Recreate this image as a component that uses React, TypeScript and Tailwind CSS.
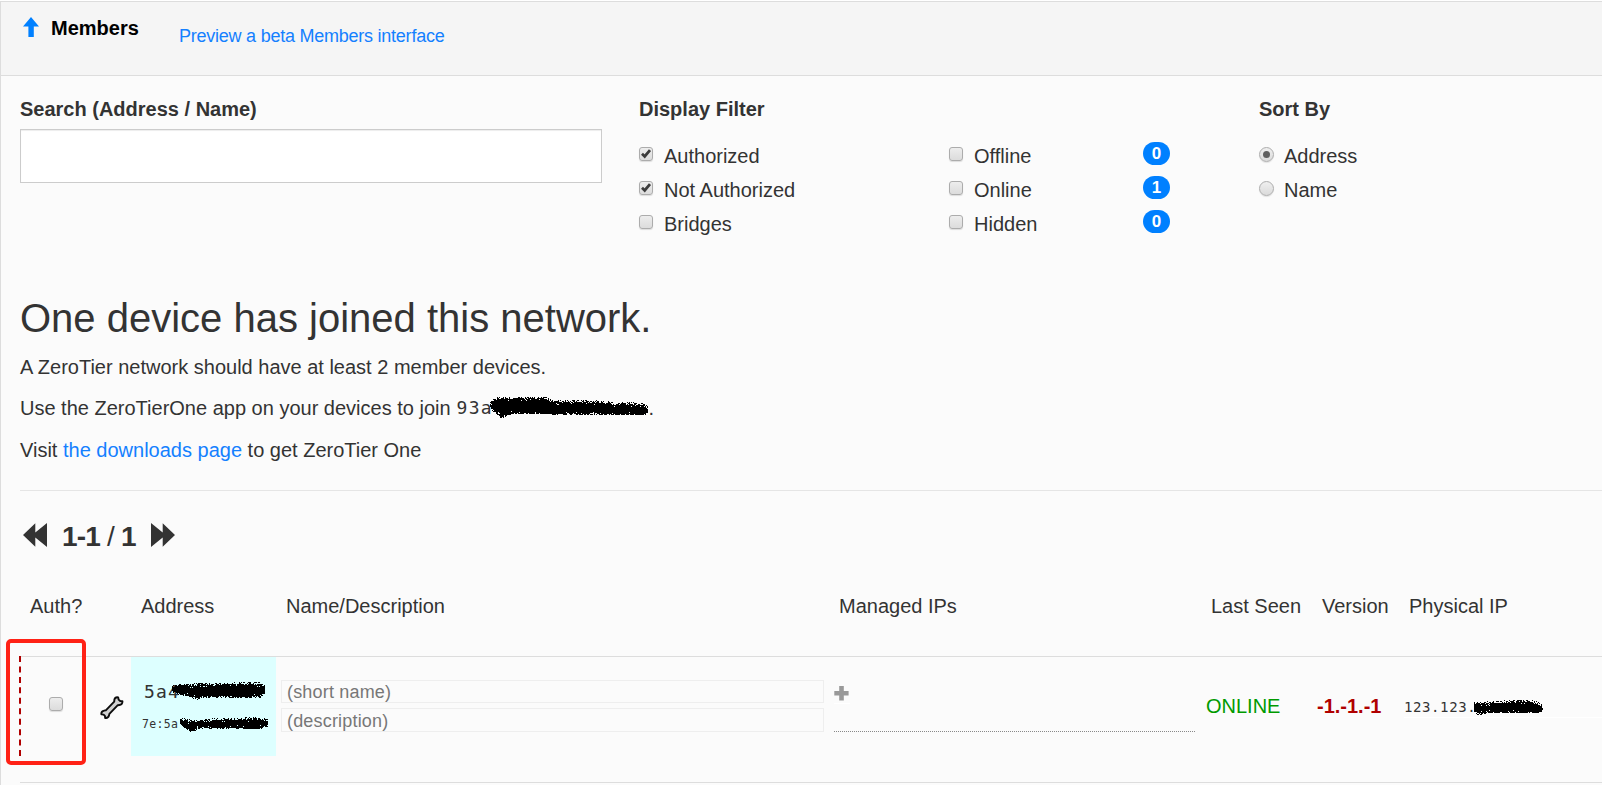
import type { ReactNode } from "react";

type Point = [number, number, number];

function makeRandom(seed: number) {
  let s = seed;
  return () => {
    s = (s * 1664525 + 1013904223) % 4294967296;
    return s / 4294967296;
  };
}

/* Grainy marker stroke; each point is [x, top, bottom] of the stroke outline. */
function Scribble({ points, width, height, seed, className }: { points: Point[]; width: number; height: number; seed: number; className: string }) {
  const random = makeRandom(seed);
  let d = "";
  for (let i = 0; i < points.length - 1; i++) {
    const [x0, t0, b0] = points[i];
    const [x1, t1, b1] = points[i + 1];
    for (let x = x0; x < x1; x++) {
      const k = (x - x0) / (x1 - x0);
      const top = t0 + (t1 - t0) * k;
      const bottom = b0 + (b1 - b0) * k;
      for (let y = Math.floor(top) - 1; y <= Math.ceil(bottom); y++) {
        const depth = Math.min(y - top, bottom - y);
        const density = depth < 0 ? 0.4 : depth < 1 ? 0.8 : depth < 3 ? 0.95 : 1;
        if (random() < density) d += `M${x} ${y}h1v1h-1z`;
      }
    }
  }
  return (
    <svg className={className} width={width} height={height} viewBox={`0 0 ${width} ${height}`} shapeRendering="crispEdges" aria-hidden="true">
      <path d={d} fill="#000" />
    </svg>
  );
}

function Check({ checked = false }: { checked?: boolean }) {
  return (
    <span className="block h-[14px] w-[14px] shrink-0 rounded-[3px] border border-[#acacac] bg-linear-to-b from-[#ededed] to-[#dcdcdc] shadow-[0_1px_1px_rgba(0,0,0,0.12)]">
      {checked && (
        <svg width="12" height="12" viewBox="0 0 12 12" className="block">
          <path d="M2 5.8 4.7 8.4 10 2.2" fill="none" stroke="#3c3c3c" strokeWidth="2.8" />
        </svg>
      )}
    </span>
  );
}

function Radio({ checked = false }: { checked?: boolean }) {
  return (
    <span className="flex h-[15px] w-[15px] shrink-0 items-center justify-center rounded-full border border-[#adadad] bg-linear-to-b from-[#efefef] to-[#dbdbdb] shadow-[0_1px_1px_rgba(0,0,0,0.1)]">
      {checked && <span className="h-[7px] w-[7px] rounded-full bg-[#606060]" />}
    </span>
  );
}

function Option({ control, label, count }: { control: ReactNode; label: string; count?: number }) {
  return (
    <div className="flex h-[34px] items-start">
      <span className="mt-[5px] flex w-[25px] shrink-0">{control}</span>
      <span className="leading-[28px]">{label}</span>
      {count !== undefined && (
        <span className="mr-[89px] ml-auto h-[23px] w-[27px] rounded-full bg-[#0080ff] text-center text-[17px] leading-[23px] font-bold text-white">{count}</span>
      )}
    </div>
  );
}

function DoubleArrow({ flip = false }: { flip?: boolean }) {
  return (
    <svg width="24" height="24" viewBox="0 0 24 24" className={flip ? "block shrink-0 -scale-x-100" : "block shrink-0"}>
      <path d="M0 12 12.3.3V9.5L24 0V24L12.3 14.5V23.7z" fill="#333" />
    </svg>
  );
}

function Wrench() {
  return (
    <svg width="24" height="24" viewBox="0 0 24 24" className="block">
      <path
        d="M14.4 3.6C14.8 2 16.4 1.1 18.2 1.4L18.6 3.6 20.2 5 22.4 5.2C22.7 7.2 21.4 8.9 19.4 9L17.8 9.2 9.4 17.8 9 19.6C8.5 21.3 7 22.3 5.2 22L4.9 19.9 3.6 18.6 1.4 18.4C1.1 16.4 2.4 14.9 4.2 14.6L5.8 14.3 14.2 5.6z"
        fill="#d0d0d0"
        stroke="#0c0c0c"
        strokeWidth="1.9"
        strokeLinejoin="round"
      />
    </svg>
  );
}

const mono = "font-['DejaVu_Sans_Mono',monospace]";
const columns = "grid grid-cols-[111px_145px_553px_372px_111px_87px_1fr]";

export default function App() {
  return (
    <div className="h-[785px] overflow-hidden bg-white pt-px font-['Liberation_Sans',Arial,sans-serif] text-[20px] leading-[28px] text-[#333]">
      <section className="h-[784px] border-t border-l border-[#ddd] bg-[#fbfbfb]">
        <header className="flex h-[74px] border-b border-[#ddd] bg-[#f5f5f5] pl-[22px]">
          <svg width="16" height="20" viewBox="0 0 16 20" className="mt-[15px] block">
            <path d="M8 0 16 9.5H10.8V20H5.4V9.5H0z" fill="#0080ff" />
          </svg>
          <h4 className="mt-[12px] ml-[12px] w-[128px] font-bold text-black">Members</h4>
          <a className="mt-[20px] text-[18px] tracking-[-0.24px] text-[#1480ff]">Preview a beta Members interface</a>
        </header>

        <div className="pl-[19px]">
          <div className="grid h-[214px] grid-cols-[620px_619px_1fr] pt-[19px]">
            <div>
              <label className="block font-bold">Search (Address / Name)</label>
              <input className="mt-[6px] block h-[54px] w-[582px] border border-[#ccc] bg-white shadow-[inset_0_1px_1px_rgba(0,0,0,0.075)]" />
            </div>
            <div>
              <h5 className="-ml-px font-bold">Display Filter</h5>
              <div className="mt-[19px] -ml-px grid grid-cols-[310px_310px]">
                <div>
                  <Option control={<Check checked />} label="Authorized" />
                  <Option control={<Check checked />} label="Not Authorized" />
                  <Option control={<Check />} label="Bridges" />
                </div>
                <div>
                  <Option control={<Check />} label="Offline" count={0} />
                  <Option control={<Check />} label="Online" count={1} />
                  <Option control={<Check />} label="Hidden" count={0} />
                </div>
              </div>
            </div>
            <div>
              <h5 className="font-bold">Sort By</h5>
              <div className="mt-[19px]">
                <Option control={<Radio checked />} label="Address" />
                <Option control={<Radio />} label="Name" />
              </div>
            </div>
          </div>

          <h1 className="mt-[6px] text-[40px] leading-[44px]">One device has joined this network.</h1>
          <p className="mt-[13px]">A ZeroTier network should have at least 2 member devices.</p>
          <p className="relative mt-[13px] flex">
            Use the ZeroTierOne app on your devices to join
            <span className={`${mono} ml-[6px] w-[192px] text-[18px] tracking-[1.2px]`}>93a</span>.
            <Scribble
              seed={7}
              width={162}
              height={24}
              className="absolute top-[3px] left-[469px]"
              points={[[1, 6, 10], [5, 2, 15], [12, 1, 20], [22, 1, 16], [30, 1, 16], [55, 1, 16], [62, 4, 16], [110, 5, 17], [120, 6, 17], [145, 7, 17], [154, 8, 17], [159, 10, 15]]}
            />
          </p>
          <p className="mt-[14px]">
            Visit <a className="text-[#1480ff]">the downloads page</a> to get ZeroTier One
          </p>
          <hr className="mt-[26px] border-[#e5e5e5]" />

          <div className="mt-[32px] flex h-[24px] items-center pl-[3px] text-[28px]">
            <DoubleArrow />
            <span className="mt-[3px] ml-[15px] flex w-[89px] gap-[7px] tracking-[-0.8px]">
              <b>1-1</b>/<b>1</b>
            </span>
            <DoubleArrow flip />
          </div>

          <div className={`${columns} mt-[45px] h-[65px] border-b border-[#ddd]`}>
            <span className="pl-[10px]">Auth?</span>
            <span className="pl-[10px]">Address</span>
            <span className="pl-[10px]">Name/Description</span>
            <span className="pl-[10px]">Managed IPs</span>
            <span className="pl-[10px]">Last Seen</span>
            <span className="pl-[10px]">Version</span>
            <span className="pl-[10px]">Physical IP</span>
          </div>

          <div className={`${columns} relative h-[126px] border-b border-[#ddd]`}>
            <svg className="absolute -top-px -left-px" width="2" height="101">
              <path d="M1 0V101" stroke="#b00000" strokeWidth="2" strokeDasharray="6 4.45" />
            </svg>
            <div className="absolute top-[-18px] left-[-14px] h-[126px] w-[80px] rounded-[5px] border-4 border-[#ff2216]" />
            <div className="flex pl-[29px]">
              <span className="mt-[40px]">
                <Check />
              </span>
              <span className="mt-[39px] ml-[37px]">
                <Wrench />
              </span>
            </div>
            <div className={`${mono} relative h-[99px] bg-[#dff]`}>
              <div className="mt-[21px] ml-[13px] text-[18px] tracking-[1.2px]">5a4</div>
              <div className="mt-[4px] ml-[11px] text-[11.5px] tracking-[0.3px]">7e:5a</div>
              <Scribble
                seed={11}
                width={96}
                height={19}
                className="absolute top-[25px] left-[40px]"
                points={[[1, 5, 9], [6, 3, 11], [18, 3, 14], [26, 2, 17], [34, 2, 14], [60, 2, 15], [78, 1, 15], [90, 2, 14], [94, 5, 10]]}
              />
              <Scribble
                seed={23}
                width={91}
                height={16}
                className="absolute top-[60px] left-[48px]"
                points={[[1, 3, 6], [5, 2, 10], [11, 4, 14], [20, 4, 11], [45, 2, 10], [65, 2, 11], [80, 1, 11], [89, 4, 8]]}
              />
            </div>
            <div className="pt-[23px] pl-[5px] text-[18px] text-[#777]">
              <div className="h-[23px] w-[543px] border border-[#eee] pl-[5px] leading-[22px] tracking-[0.18px]">(short name)</div>
              <div className="mt-[5px] h-[24px] w-[543px] border border-[#eee] pl-[5px] leading-[24px] tracking-[0.18px]">(description)</div>
            </div>
            <div className="pl-[5px]">
              <div className="h-[75px] w-[361px] border-b border-dotted border-[#888] pt-[29px]">
                <svg width="16" height="18" viewBox="0 0 16 18" className="block">
                  <path d="M5.2 0H9.8V5H14.6V9.4H9.8V14.4H5.2V9.4H.3V5H5.2z" fill="#999" />
                  <path d="M0 17.5H16" stroke="#fff" />
                </svg>
              </div>
            </div>
            <div className="mt-[35px] pl-[5px] text-[#009a00]">ONLINE</div>
            <div className="mt-[35px] pl-[5px] font-bold text-[#b00000]">-1.-1.-1</div>
            <div className={`${mono} relative mt-[37px] ml-[5px] h-[24px] border-b border-white text-[14px] leading-[26px] tracking-[0.6px]`}>
              <span>123.123.</span>
              <Scribble
                seed={31}
                width={72}
                height={16}
                className="absolute top-[6px] left-[69px]"
                points={[[1, 3, 11], [5, 3, 14], [13, 3, 12], [30, 2, 12], [45, 1, 12], [58, 1, 12], [66, 4, 12], [70, 7, 10]]}
              />
            </div>
          </div>
        </div>
      </section>
    </div>
  );
}
